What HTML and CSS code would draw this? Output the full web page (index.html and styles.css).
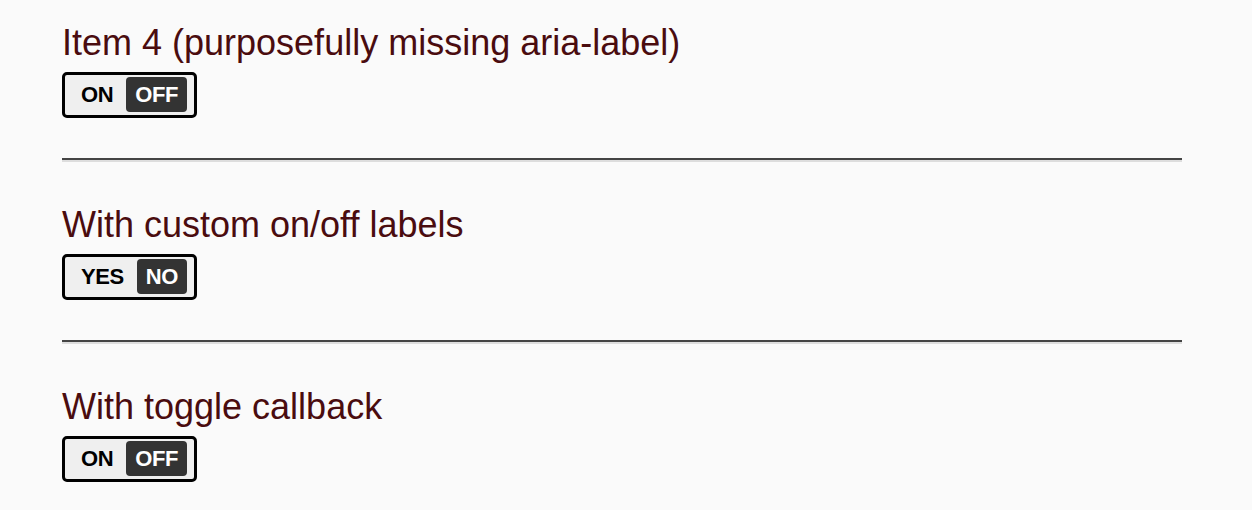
FILE: index.html
```html
<!DOCTYPE html>
<html>
<head>
<meta charset="utf-8">
<link rel="stylesheet" href="styles.css">
</head>
<body>
<main class="page">
  <section class="item">
    <h2 class="title">Item 4 (purposefully missing aria-label)</h2>
    <div class="toggle"><span class="opt">ON</span><span class="opt active">OFF</span></div>
  </section>
  <hr class="sep">
  <section class="item">
    <h2 class="title">With custom on/off labels</h2>
    <div class="toggle"><span class="opt">YES</span><span class="opt active">NO</span></div>
  </section>
  <hr class="sep">
  <section class="item">
    <h2 class="title">With toggle callback</h2>
    <div class="toggle"><span class="opt">ON</span><span class="opt active">OFF</span></div>
  </section>
</main>
</body>
</html>
```
FILE: styles.css
```css
html, body {
  margin: 0;
  padding: 0;
  background: #fafafa;
}
.page {
  padding: 22px 70px 0 62px;
  font-family: "Liberation Sans", Arial, sans-serif;
}
.item {
  display: flex;
  flex-direction: column;
  align-items: flex-start;
}
.title {
  margin: 0;
  font-weight: normal;
  font-size: 36px;
  line-height: 41px;
  color: #4a0c0f;
}
.toggle {
  display: flex;
  align-items: center;
  margin-top: 9px;
  box-sizing: border-box;
  width: 135px;
  height: 46px;
  border: 3px solid #000;
  border-radius: 5px;
  background: #efefef;
  padding: 2px 7px 3px 16px;
}
.opt {
  font-weight: bold;
  font-size: 22px;
  letter-spacing: -0.4px;
  color: #000;
}
.opt.active {
  margin-left: auto;
  background: #333;
  color: #fff;
  border-radius: 4px;
  height: 35px;
  line-height: 35px;
  padding: 0 9px;
}
.sep {
  margin: 40px 0 42px;
  border: 0;
  border-top: 2px solid #444;
  border-bottom: 2px solid #ddd;
  height: 0;
}
```
